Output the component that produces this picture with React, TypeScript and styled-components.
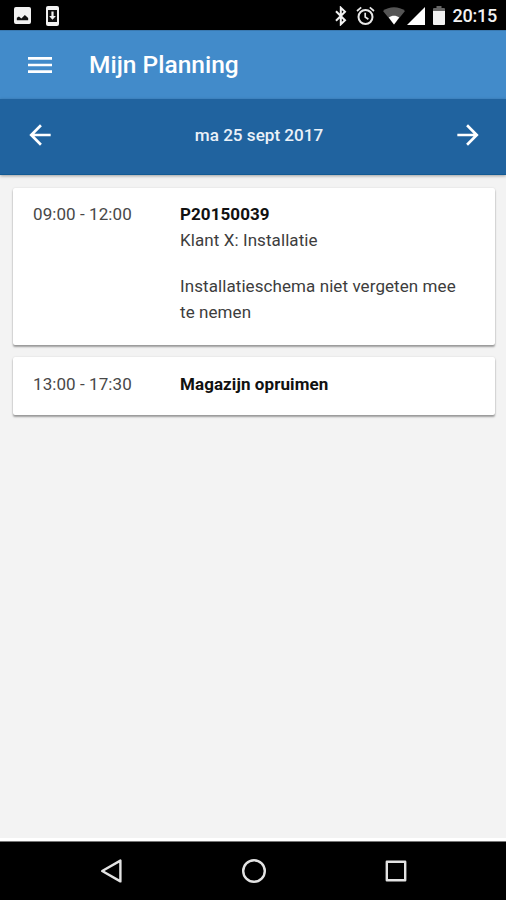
import React from "react";
import styled, { createGlobalStyle } from "styled-components";

const GlobalStyle = createGlobalStyle`
  * { box-sizing: border-box; }
  body { margin: 0; background: #f3f3f3; font-family: Roboto, "Noto Sans", sans-serif; }
  svg { display: block; flex: none; }
`;

const Screen = styled.div`
  display: flex;
  flex-direction: column;
  height: 900px;
  width: 506px;
  overflow: hidden;
  background: #f3f3f3;
`;

const StatusBar = styled.div`
  display: flex;
  align-items: center;
  justify-content: space-between;
  height: 30px;
  flex: none;
  padding: 1px 9px 0 14px;
  background: #000;
  color: #f2f2f2;
`;

const StatusGroup = styled.div<{ $gap: number }>`
  display: flex;
  align-items: center;
  gap: ${(p) => p.$gap}px;
`;

const Clock = styled.span`
  font-size: 18px;
  line-height: 28px;
  font-weight: 500;
  letter-spacing: -0.25px;
  padding: 1px 0 0 8px;
`;

const AppBar = styled.header`
  display: flex;
  align-items: center;
  gap: 33px;
  height: 69px;
  flex: none;
  padding: 0 24px;
  background: #428bca;
  border-top: 1px solid #3a79b0;
  color: #fff;
`;

const Title = styled.h1`
  margin: 0;
  font-size: 24.5px;
  line-height: 32px;
  font-weight: 500;
`;

const IconButton = styled.button`
  display: flex;
  padding: 0;
  border: 0;
  background: none;
  color: inherit;
`;

const DateBar = styled.nav`
  display: flex;
  align-items: center;
  justify-content: space-between;
  height: 76px;
  flex: none;
  padding: 0 22px 4px 24px;
  background: #20639f;
  border-bottom: 1px solid #125a94;
  box-shadow: 0 1px 3px rgba(0, 0, 0, 0.35);
  color: #fff;
`;

const DateLabel = styled.span`
  font-size: 17.1px;
  font-weight: 500;
  line-height: 24px;
  margin-left: 10px;
  color: #eaf1f8;
`;

const Agenda = styled.main`
  display: flex;
  flex-direction: column;
  flex: 1;
  gap: 12px;
  padding: 13px 11px 0 13px;
  border-bottom: 3px solid #fff;
`;

const Card = styled.article<{ $height: number; $top: number }>`
  display: grid;
  grid-template-columns: 147px 1fr;
  height: ${(p) => p.$height}px;
  padding: ${(p) => p.$top}px 20px 0;
  background: #fff;
  border-radius: 2px;
  box-shadow: 0 2px 2px rgba(0, 0, 0, 0.35), 0 0 2px rgba(0, 0, 0, 0.12);
  font-size: 17px;
  line-height: 26px;
  letter-spacing: 0.08px;
`;

const Time = styled.time`
  color: #484848;
`;

const Heading = styled.h2`
  margin: 0;
  font: inherit;
  font-weight: 700;
  color: #111;
`;

const Line = styled.p<{ $spaced?: boolean }>`
  margin: ${(p) => (p.$spaced ? 19.5 : 0)}px 0 0;
  color: #3d3d3d;
`;

const NavBar = styled.footer`
  display: flex;
  justify-content: space-between;
  height: 59px;
  flex: none;
  padding: 16px 97px 0 98px;
  background: #000;
  border-top: 1px solid #777;
`;

const MaterialIcon = ({ d }: { d: string }) => (
  <svg width="32" height="32" viewBox="0 0 24 24" fill="currentColor">
    <path d={d} />
  </svg>
);

const PictureIcon = () => (
  <svg width="17" height="17" viewBox="0 0 18 18">
    <rect width="18" height="18" rx="2" fill="#f2f2f2" />
    <path d="M3 14v-2.5l2.2-1.5 2.6 2.2 3.7-3.8L15 11.6V14z" fill="#111" />
  </svg>
);

const DownloadIcon = () => (
  <svg width="13" height="20" viewBox="0 0 13 20">
    <rect width="13" height="20" rx="2" fill="#f2f2f2" />
    <path d="M2 4h9v12H2z" fill="#111" />
    <path d="M5.4 5.5h2.2v4.5h2.3l-3.4 3.8L3.1 10h2.3z" fill="#f2f2f2" />
  </svg>
);

const BluetoothIcon = () => (
  <svg width="12" height="20" viewBox="0 0 12 20" fill="none" stroke="#f2f2f2" strokeWidth="2">
    <path d="M1 5.3l9 9-4.2 4V1.7l4.2 4-9 9" />
  </svg>
);

const AlarmIcon = () => (
  <svg width="19" height="20" viewBox="0 0 19 20" fill="none" stroke="#e8e8e8" strokeWidth="2">
    <circle cx="9.5" cy="11" r="7" />
    <path d="M1 5l4.2-3.6M18 5l-4.2-3.6M9.2 6.8V11l3.2 2.2" strokeWidth="1.7" />
  </svg>
);

const WifiIcon = () => (
  <svg width="22" height="18" viewBox="0 0 22 18">
    <path d="M0 4C6-1 16-1 22 4L11 17.5z" fill="#555" />
    <path d="M5.8 10.4c3-2.2 7.4-2.2 10.4 0L11 17.5z" fill="#fff" />
  </svg>
);

const SignalIcon = () => (
  <svg width="18" height="18" viewBox="0 0 18 18">
    <path d="M0 18L18 0v18z" fill="#fff" />
  </svg>
);

const BatteryIcon = () => (
  <svg width="12" height="19" viewBox="0 0 12 19">
    <path d="M3.5 0h5v2H11q1 0 1 1v2.5H0V3q0-1 1-1h2.5z" fill="#666" />
    <path d="M0 5h12v13q0 1-1 1H1q-1 0-1-1z" fill="#f2f2f2" />
  </svg>
);

const SystemIcon = ({ children }: { children: React.ReactNode }) => (
  <svg width="26" height="26" viewBox="0 0 26 26" fill="none" stroke="#e3e3e3" strokeWidth="2.4" strokeLinejoin="round">
    {children}
  </svg>
);

export default function App() {
  return (
    <>
      <GlobalStyle />
      <Screen>
        <StatusBar>
          <StatusGroup $gap={15}>
            <PictureIcon />
            <DownloadIcon />
          </StatusGroup>
          <StatusGroup $gap={8}>
            <StatusGroup $gap={9}>
              <BluetoothIcon />
              <AlarmIcon />
            </StatusGroup>
            <StatusGroup $gap={2}>
              <WifiIcon />
              <SignalIcon />
            </StatusGroup>
            <StatusGroup $gap={0}>
              <BatteryIcon />
              <Clock>20:15</Clock>
            </StatusGroup>
          </StatusGroup>
        </StatusBar>
        <AppBar>
          <IconButton aria-label="Menu">
            <MaterialIcon d="M3 18h18v-2H3v2zm0-5h18v-2H3v2zm0-7v2h18V6H3z" />
          </IconButton>
          <Title>Mijn Planning</Title>
        </AppBar>
        <DateBar>
          <IconButton aria-label="Vorige dag">
            <MaterialIcon d="M20 11H7.83l5.59-5.59L12 4l-8 8 8 8 1.41-1.41L7.83 13H20v-2z" />
          </IconButton>
          <DateLabel>ma 25 sept 2017</DateLabel>
          <IconButton aria-label="Volgende dag">
            <MaterialIcon d="M12 4l-1.41 1.41L16.17 11H4v2h12.17l-5.58 5.59L12 20l8-8z" />
          </IconButton>
        </DateBar>
        <Agenda>
          <Card $height={157} $top={13}>
            <Time>09:00 - 12:00</Time>
            <div>
              <Heading>P20150039</Heading>
              <Line>Klant X: Installatie</Line>
              <Line $spaced>
                Installatieschema niet vergeten mee
                <br />
                te nemen
              </Line>
            </div>
          </Card>
          <Card $height={58} $top={14}>
            <Time>13:00 - 17:30</Time>
            <Heading>Magazijn opruimen</Heading>
          </Card>
        </Agenda>
        <NavBar>
          <SystemIcon>
            <path d="M22.4 2.6v20.8L4.2 13z" />
          </SystemIcon>
          <SystemIcon>
            <circle cx="13" cy="13" r="10.8" />
          </SystemIcon>
          <SystemIcon>
            <path d="M3.8 3.8h18.4v18.4H3.8z" />
          </SystemIcon>
        </NavBar>
      </Screen>
    </>
  );
}
